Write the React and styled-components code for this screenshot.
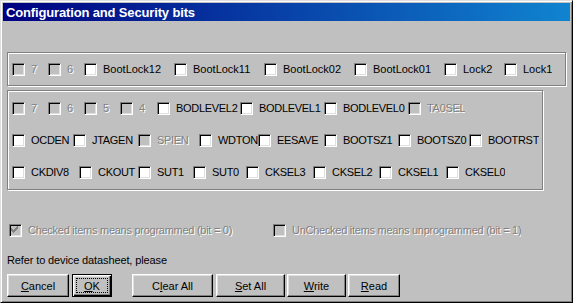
import React from 'react';
import styled, { createGlobalStyle } from 'styled-components';

const GlobalStyle = createGlobalStyle`
	html, body {
		margin: 0;
		padding: 0;
		background: #c0c0c0;
	}
`;

const Window = styled.div`
	box-sizing: border-box;
	width: 573px;
	height: 303px;
	padding: 2px;
	background: #c0c0c0;
	border: 1px solid;
	border-color: #dfdfdf #000 #000 #dfdfdf;
	box-shadow: inset 1px 1px #fff, inset -1px -1px #808080;
	font-family: "Liberation Sans", Arial, sans-serif;
	font-size: 11px;
	color: #000;
	display: flex;
	flex-direction: column;
`;

const TitleBar = styled.div`
	height: 18px;
	flex: none;
	display: flex;
	align-items: center;
	padding-left: 3px;
	background: linear-gradient(to right, #000080, #1084d0);
	color: #fff;
	font-weight: bold;
	font-size: 13px;
	letter-spacing: -0.15px;
	white-space: nowrap;
`;

const Body = styled.div`
	padding: 0 4px;
	display: flex;
	flex-direction: column;
`;

const GroupBox = styled.div`
	box-sizing: border-box;
	width: ${ p => p.$w }px;
	height: ${ p => p.$h }px;
	margin-top: ${ p => p.$top }px;
	padding: ${ p => p.$padTop }px 0 0 4px;
	border: 1px solid #808080;
	box-shadow: inset 1px 1px #fff, 1px 1px #fff;
	display: flex;
	flex-direction: column;
	gap: 19px;
`;

const Row = styled.div`
	display: flex;
	align-items: center;
	height: 13px;
	padding-left: ${ p => p.$indent || 0 }px;
	margin-top: ${ p => p.$top || 0 }px;
`;

const Item = styled.div`
	display: flex;
	align-items: center;
	flex: none;
	width: ${ p => ( p.$w ? `${ p.$w }px` : 'auto' ) };
	height: 13px;
	overflow: hidden;
	white-space: nowrap;
`;

const Box = styled.span`
	box-sizing: border-box;
	flex: none;
	width: 13px;
	height: 13px;
	border: 1px solid;
	border-color: #808080 #fff #fff #808080;
	box-shadow: inset 1px 1px #000, inset -1px -1px #dfdfdf;
	background: ${ p => ( p.$disabled ? '#c0c0c0' : '#fff' ) };
	display: flex;

	svg {
		display: block;
	}
`;

const Label = styled.span`
	margin-left: 6px;
	line-height: 13px;
	letter-spacing: ${ p => p.$spacing || 0 }px;
	color: ${ p => ( p.$disabled ? '#808080' : '#000' ) };
	text-shadow: ${ p => ( p.$disabled ? '1px 1px #fff' : 'none' ) };
`;

const Note = styled.div`
	margin-top: 17px;
	line-height: 13px;
	letter-spacing: -0.12px;
	white-space: nowrap;
`;

const ButtonBar = styled.div`
	display: flex;
	margin-top: 7px;
`;

const Button = styled.button`
	position: relative;
	box-sizing: border-box;
	width: ${ p => p.$w }px;
	height: 23px;
	margin-left: ${ p => p.$gap || 0 }px;
	padding: 0;
	font: inherit;
	color: #000;
	background: #c0c0c0;
	border: 1px solid;
	border-color: #fff #000 #000 #fff;
	box-shadow: inset -1px -1px #808080, inset 1px 1px #dfdfdf;
	flex: none;

	${ p => p.$default && `
		border-color: #000;
		box-shadow: inset 1px 1px #fff, inset -1px -1px #000, inset -2px -2px #808080, inset 2px 2px #dfdfdf;

		&::after {
			content: '';
			position: absolute;
			inset: 3px;
			border: 1px dotted #000;
		}
	` }
`;

const CheckMark = ( { color } ) => {
	const cols = [ [ 0, 2 ], [ 1, 3 ], [ 2, 4 ], [ 3, 3 ], [ 4, 2 ], [ 5, 1 ], [ 6, 0 ] ];
	return (
		<svg width="11" height="11" viewBox="0 0 11 11" shapeRendering="crispEdges">
			{ cols.map( ( [ x, y ] ) => (
				<rect key={ x } x={ x + 1 } y={ y + 1 } width="1" height="3" fill={ color } />
			) ) }
		</svg>
	);
};

const CheckItem = ( { w, label, disabled, checked, spacing } ) => (
	<Item $w={ w }>
		<Box $disabled={ disabled }>
			{ checked && <CheckMark color={ disabled ? '#808080' : '#000' } /> }
		</Box>
		<Label $disabled={ disabled } $spacing={ spacing }>{ label }</Label>
	</Item>
);

const lockBits = [
	{ w: 36, label: '7', disabled: true },
	{ w: 36, label: '6', disabled: true },
	{ w: 90, label: 'BootLock12' },
	{ w: 90, label: 'BootLock11' },
	{ w: 90, label: 'BootLock02' },
	{ w: 90, label: 'BootLock01' },
	{ w: 60, label: 'Lock2' },
	{ label: 'Lock1' },
];

const fuseRows = [
	[
		{ w: 36, label: '7', disabled: true },
		{ w: 36, label: '6', disabled: true },
		{ w: 36, label: '5', disabled: true },
		{ w: 37, label: '4', disabled: true },
		{ w: 83, label: 'BODLEVEL2' },
		{ w: 84, label: 'BODLEVEL1' },
		{ w: 84, label: 'BODLEVEL0' },
		{ label: 'TA0SEL', disabled: true },
	],
	[
		{ w: 61, label: 'OCDEN' },
		{ w: 65, label: 'JTAGEN' },
		{ w: 61, label: 'SPIEN', disabled: true },
		{ w: 59, label: 'WDTON' },
		{ w: 66, label: 'EESAVE' },
		{ w: 74, label: 'BOOTSZ1' },
		{ w: 71, label: 'BOOTSZ0' },
		{ label: 'BOOTRST' },
	],
	[
		{ w: 67, label: 'CKDIV8' },
		{ w: 59, label: 'CKOUT' },
		{ w: 55, label: 'SUT1' },
		{ w: 53, label: 'SUT0' },
		{ w: 67, label: 'CKSEL3' },
		{ w: 66, label: 'CKSEL2' },
		{ w: 67, label: 'CKSEL1' },
		{ label: 'CKSEL0' },
	],
];

export default function App() {
	return (
		<>
			<GlobalStyle />
			<Window>
				<TitleBar>Configuration and Security bits</TitleBar>
				<Body>
					<GroupBox $w={ 559 } $h={ 34 } $top={ 31 } $padTop={ 10 }>
						<Row>
							{ lockBits.map( bit => (
								<CheckItem key={ bit.label + bit.w } { ...bit } />
							) ) }
						</Row>
					</GroupBox>

					<GroupBox $w={ 536 } $h={ 100 } $top={ 4 } $padTop={ 11 }>
						{ fuseRows.map( ( row, i ) => (
							<Row key={ i }>
								{ row.map( bit => (
									<CheckItem key={ bit.label } spacing={ -0.3 } { ...bit } />
								) ) }
							</Row>
						) ) }
					</GroupBox>

					<Row $top={ 34 } $indent={ 2 }>
						<CheckItem w={ 264 } spacing={ -0.27 } label="Checked items means programmed (bit = 0)" disabled checked />
						<CheckItem spacing={ -0.27 } label="UnChecked items means unprogrammed (bit = 1)" disabled />
					</Row>

					<Note>Refer to device datasheet, please</Note>

					<ButtonBar>
						<Button $w={ 62 }><u>C</u>ancel</Button>
						<Button $w={ 40 } $gap={ 3 } $default><u>O</u>K</Button>
						<Button $w={ 81 } $gap={ 20 }>C<u>l</u>ear All</Button>
						<Button $w={ 69 } $gap={ 3 }><u>S</u>et All</Button>
						<Button $w={ 59 } $gap={ 2 }><u>W</u>rite</Button>
						<Button $w={ 52 } $gap={ 2 }><u>R</u>ead</Button>
					</ButtonBar>
				</Body>
			</Window>
		</>
	);
}
